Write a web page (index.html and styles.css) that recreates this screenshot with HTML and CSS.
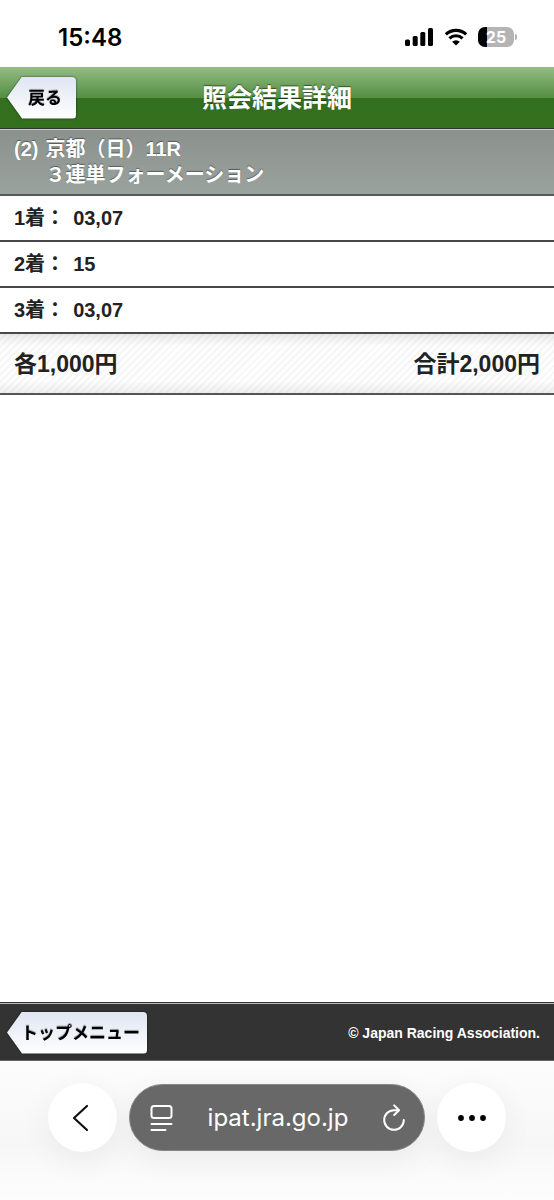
FILE: index.html
```html
<!DOCTYPE html>
<html lang="ja">
<head>
    <meta charset="UTF-8">
    <meta name="viewport" content="width=device-width, initial-scale=1.0">
    <title>照会結果詳細</title>
    <link rel="stylesheet" href="styles.css">
</head>
<body>
    <div class="status-bar">
        <span class="clock">15:48</span>
        <div class="status-icons">
            <svg class="signal" width="29" height="18" viewBox="0 0 29 18">
                <rect x="0" y="11.5" width="5" height="6.5" rx="1.5"/>
                <rect x="7.7" y="8" width="5" height="10" rx="1.5"/>
                <rect x="15.3" y="4" width="5" height="14" rx="1.5"/>
                <rect x="23" y="0" width="5" height="18" rx="1.5"/>
            </svg>
            <svg class="wifi" width="24" height="18" viewBox="0 0 24 18">
                <path d="M1.8 6.4a15 15 0 0 1 20.4 0M5.4 10.3a9.7 9.7 0 0 1 13.2 0" fill="none" stroke="#000" stroke-width="3.1"/>
                <path d="M12 17.6 8.1 13.7a5.7 5.7 0 0 1 7.8 0z"/>
            </svg>
            <div class="battery"><span class="battery-level">25</span></div>
        </div>
    </div>
    <header class="header">
        <div class="arrow"><button class="btn">戻る</button></div>
        <h1>照会結果詳細</h1>
    </header>
    <main class="content">
        <h2 class="race">
            <span>(2)</span>
            <span>京都（日）11R<br>３連単フォーメーション</span>
        </h2>
        <dl class="picks">
            <div class="pick"><dt>1着：</dt><dd>03,07</dd></div>
            <div class="pick"><dt>2着：</dt><dd>15</dd></div>
            <div class="pick"><dt>3着：</dt><dd>03,07</dd></div>
        </dl>
        <div class="total">
            <span>各1,000円</span>
            <span>合計2,000円</span>
        </div>
    </main>
    <footer class="footer">
        <div class="arrow"><button class="btn">トップメニュー</button></div>
        <small>© Japan Racing Association.</small>
    </footer>
    <nav class="browser-bar">
        <button class="round" aria-label="戻る">
            <svg width="24" height="28" viewBox="0 0 24 28">
                <path d="M16 2 3 14l13 12" fill="none" stroke="#111" stroke-width="2.2" stroke-linecap="round" stroke-linejoin="round"/>
            </svg>
        </button>
        <div class="address">
            <button class="tool" aria-label="ページメニュー">
                <svg width="24" height="28" viewBox="0 0 24 28">
                    <g fill="none" stroke="#fff" stroke-width="2" stroke-linecap="round">
                        <rect x="1.5" y="2" width="20" height="12" rx="2.5"/>
                        <path d="M1.5 20h20M1.5 26h14"/>
                    </g>
                </svg>
            </button>
            <a class="url" href="#">ipat.jra.go.jp</a>
            <button class="tool" aria-label="再読み込み">
                <svg width="24" height="28" viewBox="0 0 24 28">
                    <g fill="none" stroke="#fff" stroke-width="2" stroke-linecap="round" stroke-linejoin="round">
                        <path d="M21.8 16A9.8 9.8 0 1 1 12 6.2h4.5"/>
                        <path d="m12.2 1.4 4.8 4.8-4.8 4.8"/>
                    </g>
                </svg>
            </button>
        </div>
        <button class="round" aria-label="その他">
            <svg width="28" height="6" viewBox="0 0 28 6">
                <circle cx="3" cy="3" r="2.9"/>
                <circle cx="14" cy="3" r="2.9"/>
                <circle cx="25" cy="3" r="2.9"/>
            </svg>
        </button>
    </nav>
</body>
</html>
```

FILE: styles.css
```css
* {
    box-sizing: border-box;
}
body {
    display: flex;
    flex-direction: column;
    min-height: 100vh;
    margin: 0;
    background-color: #fff;
    color: #222;
    font-family: "Liberation Sans", "Noto Sans CJK JP", sans-serif;
    font-weight: bold;
}
h1, h2, dl, dd {
    margin: 0;
}
button {
    border: none;
    font: inherit;
    cursor: pointer;
}
svg {
    display: block;
}

/* status bar */
.status-bar {
    display: flex;
    align-items: center;
    justify-content: space-between;
    height: 67px;
    padding: 7px 40px 0 58px;
    color: #000;
    font-family: Inter, sans-serif;
}
.clock {
    font-size: 24px;
    font-weight: 600;
}
.status-icons {
    display: flex;
    align-items: center;
    gap: 10px;
}
.battery {
    position: relative;
    width: 36px;
    height: 20px;
    border-radius: 7px;
    background: linear-gradient(to right, #000 25%, #b4b4b4 25%);
    color: #fff;
    font-size: 16px;
    line-height: 20px;
    text-align: center;
}
.battery::after {
    content: "";
    position: absolute;
    top: 7px;
    right: -3px;
    width: 2px;
    height: 6px;
    border-radius: 0 2px 2px 0;
    background-color: #b4b4b4;
}

/* title bar */
.header {
    display: grid;
    grid-template-columns: 1fr auto 1fr;
    align-items: center;
    height: 62px;
    padding: 0 7px;
    border-bottom: 1px solid #333;
    background: linear-gradient(#94bd86, #558f42 50%, #326f1f 50%, #34701e);
}
h1 {
    color: #fff;
    font-size: 25px;
    line-height: 36px;
    text-shadow: 0 -1px 1px rgba(0,0,0,0.5);
}
.arrow {
    justify-self: start;
    filter: drop-shadow(0 0 1px rgba(0,0,0,0.6));
}
.btn {
    display: block;
    height: 42px;
    padding: 0 14px 2px 21px;
    border-radius: 4px;
    background: linear-gradient(#dfe5f2, #fff);
    clip-path: polygon(0 50%, 15px 0, 100% 0, 100% 100%, 15px 100%);
    color: #000;
    font-size: 17px;
    text-shadow: 0 -1px 1px rgba(0,0,0,0.4);
}

/* bet details */
.content {
    flex: 1;
}
.race {
    display: flex;
    gap: 7px;
    padding: 6px 14px;
    border-top: 1px solid #c5cbc7;
    border-bottom: 2px solid #555b58;
    background: linear-gradient(#8b918d, #9ba39f);
    color: #fff;
    font-size: 20px;
    line-height: 26px;
    text-shadow: 0 -1px 1px rgba(0,0,0,0.4);
}
.pick {
    display: flex;
    gap: 8px;
    padding: 8px 14px;
    border-bottom: 2px solid #484848;
    font-size: 20px;
    line-height: 28px;
}
.total {
    display: flex;
    justify-content: space-between;
    padding: 13px 14px 12px;
    border-bottom: 2px solid #555;
    background:
        linear-gradient(rgba(0,0,0,0.08), transparent 20%, transparent 80%, rgba(0,0,0,0.06)),
        repeating-linear-gradient(135deg, #fdfdfd 0 3px, #f6f6f6 3px 5px);
    font-size: 23px;
    line-height: 34px;
}

/* page footer */
.footer {
    display: flex;
    align-items: center;
    justify-content: space-between;
    height: 59px;
    padding: 2px 14px 0 7px;
    border-top: 1px solid #333;
    border-bottom: 1px solid #666;
    background-color: #333;
    box-shadow: inset 0 1px #bbb;
    color: #fff;
}
.footer .btn {
    padding: 0 7px 2px 14px;
}
small {
    font-size: 14px;
}

/* browser toolbar */
.browser-bar {
    display: flex;
    gap: 12px;
    height: 139px;
    padding: 22px 48px 0;
    background: linear-gradient(#fcfcfc, #f7f7f7 60%, #fdfdfd);
}
.round {
    display: flex;
    align-items: center;
    justify-content: center;
    width: 69px;
    height: 69px;
    padding: 0;
    border-radius: 50%;
    background-color: #fff;
    box-shadow: 0 8px 32px rgba(0,0,0,0.06);
}
.address {
    display: flex;
    flex: 1;
    align-items: center;
    justify-content: space-between;
    height: 67px;
    margin-top: 1px;
    padding: 0 18px 0 20px;
    border: 1px solid #888;
    border-radius: 34px;
    background-color: #686868;
    box-shadow: 0 8px 32px rgba(0,0,0,0.06);
}
.tool {
    padding: 0;
    background: none;
}
.url {
    color: #fff;
    font-family: Inter, sans-serif;
    font-size: 24px;
    font-weight: normal;
    text-decoration: none;
}
```
